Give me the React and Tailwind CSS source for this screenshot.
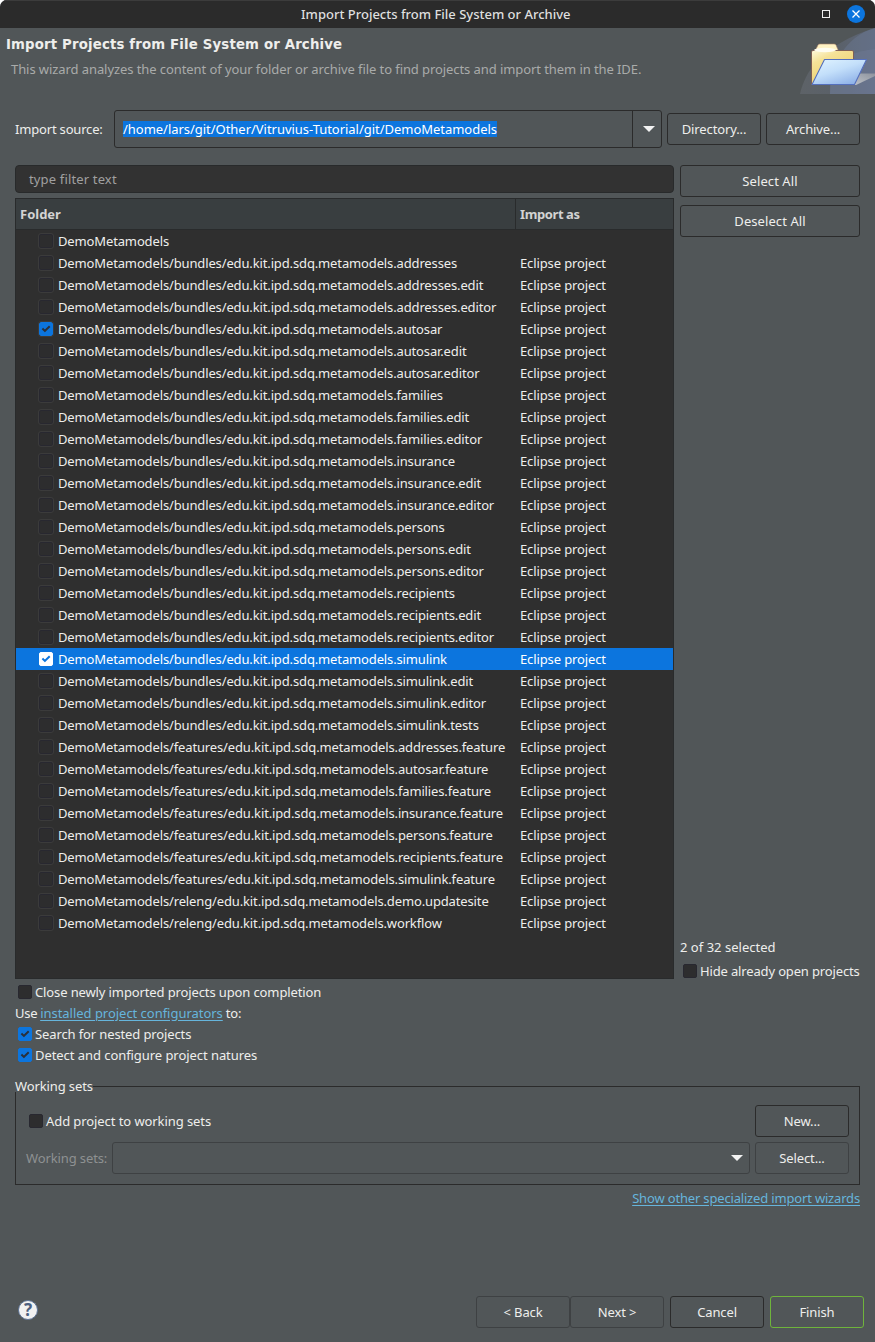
import React from "react";

const B = "DemoMetamodels/bundles/edu.kit.ipd.sdq.metamodels.";
const F = "DemoMetamodels/features/edu.kit.ipd.sdq.metamodels.";
const R = "DemoMetamodels/releng/edu.kit.ipd.sdq.metamodels.";
const rows = [
  "DemoMetamodels",
  B + "addresses", B + "addresses.edit", B + "addresses.editor",
  B + "autosar", B + "autosar.edit", B + "autosar.editor",
  B + "families", B + "families.edit", B + "families.editor",
  B + "insurance", B + "insurance.edit", B + "insurance.editor",
  B + "persons", B + "persons.edit", B + "persons.editor",
  B + "recipients", B + "recipients.edit", B + "recipients.editor",
  B + "simulink", B + "simulink.edit", B + "simulink.editor", B + "simulink.tests",
  F + "addresses.feature", F + "autosar.feature", F + "families.feature",
  F + "insurance.feature", F + "persons.feature", F + "recipients.feature",
  F + "simulink.feature",
  R + "demo.updatesite", R + "workflow",
];

function Check({ checked, inverted, inTable }) {
  const tone = inverted
    ? "bg-white border-white"
    : checked
    ? "bg-[#0c75de] border-[#0c75de]"
    : "bg-[#2d2d2e] border-[#282830]";
  const ring = inTable && !inverted ? "outline outline-1 outline-[#3b3b3b]" : "";
  return (
    <span className={`block size-[14px] shrink-0 rounded-[2px] border ${tone} ${ring}`}>
      {checked && (
        <svg className="block size-3" viewBox="0 0 12 12" fill="none">
          <path d="M2.400 5.500L4.900 7.900L9.700 3.200" stroke={inverted ? "#0c75de" : "#2b3038"} strokeWidth="2" />
        </svg>
      )}
    </span>
  );
}

function Button({ children, className = "border-[#2b2b2b]" }) {
  return (
    <button className={`flex h-8 w-[94px] shrink-0 items-center justify-center rounded-[3px] border ${className}`}>
      {children}
    </button>
  );
}

function Arrow() {
  return (
    <svg className="block h-[6px] w-3" viewBox="0 0 12 6">
      <path d="M0 0H12L6 6Z" fill="#f2f2f2" />
    </svg>
  );
}

function FolderBanner() {
  return (
    <svg className="block h-[66px] w-[75px]" viewBox="0 0 75 66">
      <defs>
        <linearGradient id="sweep" x1="0" y1="0" x2="1" y2="0">
          <stop offset="0" stopColor="#6a6f77" />
          <stop offset="0.5" stopColor="#636b7a" />
          <stop offset="1" stopColor="#69779b" />
        </linearGradient>
        <linearGradient id="back" x1="0" y1="0" x2="0.6" y2="1">
          <stop offset="0" stopColor="#fff9dc" />
          <stop offset="0.3" stopColor="#f5e298" />
          <stop offset="1" stopColor="#eccd63" />
        </linearGradient>
        <linearGradient id="front" x1="0" y1="0" x2="0.7" y2="1">
          <stop offset="0" stopColor="#e2f5ff" />
          <stop offset="0.5" stopColor="#c3dffa" />
          <stop offset="1" stopColor="#8fb2e8" />
        </linearGradient>
        <linearGradient id="shade" x1="0" y1="1" x2="1" y2="0">
          <stop offset="0" stopColor="#c4c7cc" />
          <stop offset="1" stopColor="#8d939e" />
        </linearGradient>
      </defs>
      <path d="M0 66C5 44 21 17 75 0V66Z" fill="url(#sweep)" opacity="0.5" />
      <path d="M30 66C30 38 45 8 75 0V66Z" fill="#6f7f9c" opacity="0.38" />
      <path d="M30 42C42 29 56 23 75 21V66H30Z" fill="#7580a0" opacity="0.28" />
      <path d="M59 45.500H75V48L56 57H50Z" fill="url(#shade)" />
      <path d="M15 23L18 17Q18.500 16 20 16H34Q35.500 16 36 17L38.500 23Z" fill="#fff3c4" stroke="#a98368" strokeWidth="0.6" />
      <path d="M11.500 24Q11.500 22.500 13 22.500H52Q53.500 22.500 53.500 24V56.500H11.500Z" fill="url(#back)" stroke="#7a5850" strokeWidth="0.9" />
      <ellipse cx="25" cy="22" rx="11" ry="2.200" fill="#fffdf0" />
      <path d="M24.500 31.500H66.500L54.500 56.500H12Z" fill="url(#front)" stroke="#5570bd" strokeWidth="1.100" strokeLinejoin="round" />
    </svg>
  );
}

export default function App() {
  return (
    <div className="h-[1342px] w-[875px] overflow-hidden bg-white">
      <div className="flex h-full flex-col overflow-hidden rounded-t-[7px] bg-[#515658] font-['Noto_Sans','Open_Sans',sans-serif] text-[13px] leading-5 tracking-[-0.12px] whitespace-nowrap text-[#eeeeec]">
        <header className="flex h-7 shrink-0 items-center border-t border-[#3c3c3c] bg-[#2b2b2b] pr-[10px] pb-px pl-[301px] text-[#dfdfdf]">
          <h1 className="flex-1 font-medium tracking-normal">Import Projects from File System or Archive</h1>
          <span className="mr-[17px] size-2 border border-[#f0f0f0]" />
          <span className="flex size-[18px] items-center justify-center rounded-full bg-[#0c75de]">
            <svg className="size-2" viewBox="0 0 8 8">
              <path d="M0.500 0.500L7.500 7.500M7.500 0.500L0.500 7.500" stroke="#fff" strokeWidth="1.300" />
            </svg>
          </span>
        </header>

        <section className="flex h-[66px] shrink-0 justify-between">
          <div className="pt-[7px] pl-[6px]">
            <h2 className="font-['DejaVu_Sans'] text-[13.300px] font-bold tracking-[0.160px]">Import Projects from File System or Archive</h2>
            <p className="mt-[4px] ml-[5px] tracking-[-0.080px] text-[#a9abaa]">
              This wizard analyzes the content of your folder or archive file to find projects and import them in the IDE.
            </p>
          </div>
          <FolderBanner />
        </section>

        <section className="mt-4 flex h-[38px] shrink-0 items-center pl-[15px]">
          <label className="w-[99px] tracking-[-0.180px]">Import source:</label>
          <div className="flex h-[38px] w-[548px] rounded-[3px] border border-[#2b2b2b]">
            <div className="flex flex-1 items-center pl-2">
              <span className="h-4 bg-[#0c75de] leading-4 tracking-[-0.030px] text-white">/home/lars/git/Other/Vitruvius-Tutorial/git/DemoMetamodels</span>
            </div>
            <div className="flex w-[29px] items-center justify-center border-l border-[#2b2b2b] pl-[3px]"><Arrow /></div>
          </div>
          <div className="ml-[5px] flex gap-[5px]">
            <Button>Directory...</Button>
            <Button>Archive...</Button>
          </div>
        </section>

        <main className="mt-[17px] flex h-[814px] shrink-0 gap-[6px] pl-[15px]">
          <div className="flex w-[659px] flex-col">
            <div className="flex h-[28px] shrink-0 items-center rounded-[4px] border border-[#282a2b] bg-[#323232] pl-[13px] tracking-[0.150px] text-[#a0a0a0]">type filter text</div>
            <div className="mt-[5px] flex flex-1 flex-col border border-[#292b2c] bg-[#2f2f2f]">
              <div className="flex h-[31px] border-b border-[#292b2c] bg-[#393e40] text-[#d3d3d3]">
                <span className="flex w-[500px] items-center border-r border-[#292b2c] pl-1 font-bold tracking-normal">Folder</span>
                <span className="flex items-center pl-1 font-bold tracking-[-0.400px]">Import as</span>
              </div>
              {rows.map((name, i) => (
                <div key={name} className={`flex h-[22px] items-center pl-[23px] ${i === 19 ? "bg-[#0c75de] text-white" : ""}`}>
                  <Check inTable checked={i === 4 || i === 19} inverted={i === 19} />
                  <span className="w-[467px] pl-[5px] tracking-[-0.135px]">{name}</span>
                  {i > 0 && <span>Eclipse project</span>}
                </div>
              ))}
            </div>
          </div>
          <aside className="flex w-[180px] flex-col">
            <button className="h-8 rounded-[3px] border border-[#2b2b2b] tracking-[0.080px]">Select All</button>
            <button className="mt-2 h-8 rounded-[3px] border border-[#2b2b2b] tracking-[0.080px]">Deselect All</button>
            <span className="mt-auto tracking-[0.020px]">2 of 32 selected</span>
            <label className="mt-1 mb-[-2px] flex h-5 items-center gap-[3px] pl-[3px] tracking-[-0.150px]">
              <Check /><span>Hide already open projects</span>
            </label>
          </aside>
        </main>

        <section className="mt-[2px] flex shrink-0 flex-col pl-[15px]">
          <label className="flex h-[21px] items-center gap-[3px] pl-[3px]"><Check /><span>Close newly imported projects upon completion</span></label>
          <p className="flex h-[21px] items-center gap-[3px]">
            <span className="tracking-[-0.300px]">Use</span>
            <a className="tracking-[-0.030px] text-[#66b5dc] underline underline-offset-2">installed project configurators</a>
            <span>to:</span>
          </p>
          <label className="flex h-[21px] items-center gap-[3px] pl-[3px]"><Check checked /><span>Search for nested projects</span></label>
          <label className="flex h-[21px] items-center gap-[3px] pl-[3px] tracking-[-0.060px]"><Check checked /><span>Detect and configure project natures</span></label>
        </section>

        <section className="mt-[11px] ml-[15px] w-[845px] shrink-0">
          <div className="flex h-5 items-center">
            <span>Working sets</span>
            <span className="h-5 flex-1">
              <span className="mt-[10px] block h-[10px] border-t border-r border-[#2b2b2b]" />
            </span>
          </div>
          <div className="-mt-1 h-[93px] border-x border-b border-[#2b2b2b] pt-[13px] pr-[10px] pl-[10px]">
            <div className="flex h-8 items-center justify-between">
              <label className="flex items-center gap-[3px] pl-[3px] tracking-[-0.080px]"><Check /><span>Add project to working sets</span></label>
              <Button>New...</Button>
            </div>
            <div className="mt-[5px] flex h-8 items-center">
              <span className="w-[86px] text-[#8e9192]">Working sets:</span>
              <div className="mr-[5px] flex h-8 flex-1 items-center justify-end rounded-[3px] border border-[#3e4143] pr-[6px]"><Arrow /></div>
              <Button className="border-[#3e4143]">Select...</Button>
            </div>
          </div>
          <div className="mt-[3px] text-right">
            <a className="tracking-[-0.170px] text-[#66b5dc] underline underline-offset-2">Show other specialized import wizards</a>
          </div>
        </section>

        <footer className="mt-auto mb-[14px] flex h-8 shrink-0 items-center pr-[11px] pl-[18px]">
          <span className="mt-[-4px] mr-auto flex size-5 items-center justify-center rounded-full border border-[#5d7396] bg-[#f1f1f2] text-[17px] font-bold text-[#4c5f80]">?</span>
          <Button className="border-[#3e4143]">&lt; Back</Button>
          <Button className="mr-[6px] border-[#3e4143]">Next &gt;</Button>
          <Button className="mr-[6px] border-[#2b2b2b]">Cancel</Button>
          <Button className="border-[#6fb43c]">Finish</Button>
        </footer>
      </div>
    </div>
  );
}
